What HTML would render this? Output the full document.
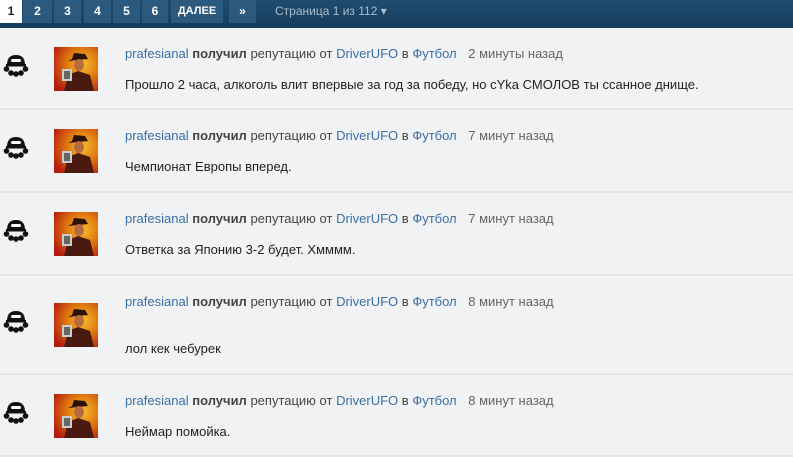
<html><head><style>
body{margin:0;width:793px;height:455px;overflow:hidden;background:#f1f2f4;font-family:"Liberation Sans",Arial,sans-serif;font-size:13px;color:#222}
.bar{height:28px;background:linear-gradient(#1f4d70,#163d5c);position:relative}
.b{position:absolute;top:0;height:23px;line-height:23px;text-align:center;color:#fff;font-weight:bold;font-size:12px;background:#2c5a7e}
.b.on{background:#fff;color:#222}
.pg{position:absolute;left:275px;top:0;line-height:23px;color:#a9bccc;font-size:12px}
.row{position:absolute;left:0;width:793px;border-bottom:2px solid #e4e5e7}
.ic{position:absolute;left:2px}
.av{position:absolute;left:54px;width:44px;height:44px;background:radial-gradient(circle at 65% 40%,#f5c030 0,#e07a10 40%,#b51c10 85%);overflow:hidden}
.l1{position:absolute;left:125px;color:#444}
.l2{position:absolute;left:125px;color:#222}
a{color:#3a6ea5;text-decoration:none}
.t{color:#666;margin-left:8px}
</style></head><body>
<div class="bar">
<div class="b on" style="left:0;width:22px">1</div>
<div class="b" style="left:23px;width:29px">2</div>
<div class="b" style="left:54px;width:27px">3</div>
<div class="b" style="left:84px;width:27px">4</div>
<div class="b" style="left:113px;width:27px">5</div>
<div class="b" style="left:142px;width:26px">6</div>
<div class="b" style="left:171px;width:52px;font-size:11px">ДАЛЕЕ</div>
<div class="b" style="left:229px;width:27px">»</div>
<div class="pg">Страница 1 из 112 ▾</div>
</div>
<div id="r"></div>
<script>
var rows=[[28,80,"Прошло 2 часа, алкоголь влит впервые за год за победу, но cYka СМОЛОВ ты ссанное днище.","2 минуты назад"],
[110,81,"Чемпионат Европы вперед.","7 минут назад"],
[193,81,"Ответка за Японию 3-2 будет. Хмммм.","7 минут назад"],
[276,97,"лол кек чебурек","8 минут назад"],
[375,80,"Неймар помойка.","8 минут назад"]];
var h="";
rows.forEach(function(r,i){
var top=r[0],ht=r[1],o=(i==3?8:0);
h+='<div class="row" style="top:'+top+'px;height:'+ht+'px">'+
'<svg class="ic" style="top:'+(24+o)+'px" width="28" height="26" viewBox="0 0 28 26"><path d="M5 13Q5 3 14 3Q23 3 23 13Z" fill="#111"/><rect x="9" y="7" width="10" height="3" rx="1.5" fill="#fff"/><rect x="4" y="12" width="20" height="2.5" fill="#111"/><circle cx="4.5" cy="17" r="2.8" fill="#111"/><circle cx="23.5" cy="17" r="2.8" fill="#111"/><circle cx="9" cy="21" r="2.8" fill="#111"/><circle cx="19" cy="21" r="2.8" fill="#111"/><circle cx="14" cy="22" r="2.8" fill="#111"/></svg>'+
'<div class="av" style="top:'+(19+o)+'px"><svg width="44" height="44"><path d="M14 14L34 12L31 7L20 6L18 12Z" fill="#2a1208"/><ellipse cx="25" cy="18" rx="5" ry="6" fill="#b86a40"/><path d="M10 44L14 28L24 24L36 28L40 44Z" fill="#4a1a10"/><rect x="8" y="22" width="10" height="12" fill="#ccc"/><rect x="10" y="24" width="6" height="8" fill="#666"/></svg></div>'+
'<div class="l1" style="top:18px"><a>prafesianal</a> <b>получил</b> репутацию от <a>DriverUFO</a> в <a>Футбол</a> <span class="t">'+r[3]+'</span></div>'+
'<div class="l2" style="top:'+(49+o*2)+'px">'+r[2]+'</div></div>';
});
document.getElementById("r").outerHTML=h;
</script>
</body></html>
